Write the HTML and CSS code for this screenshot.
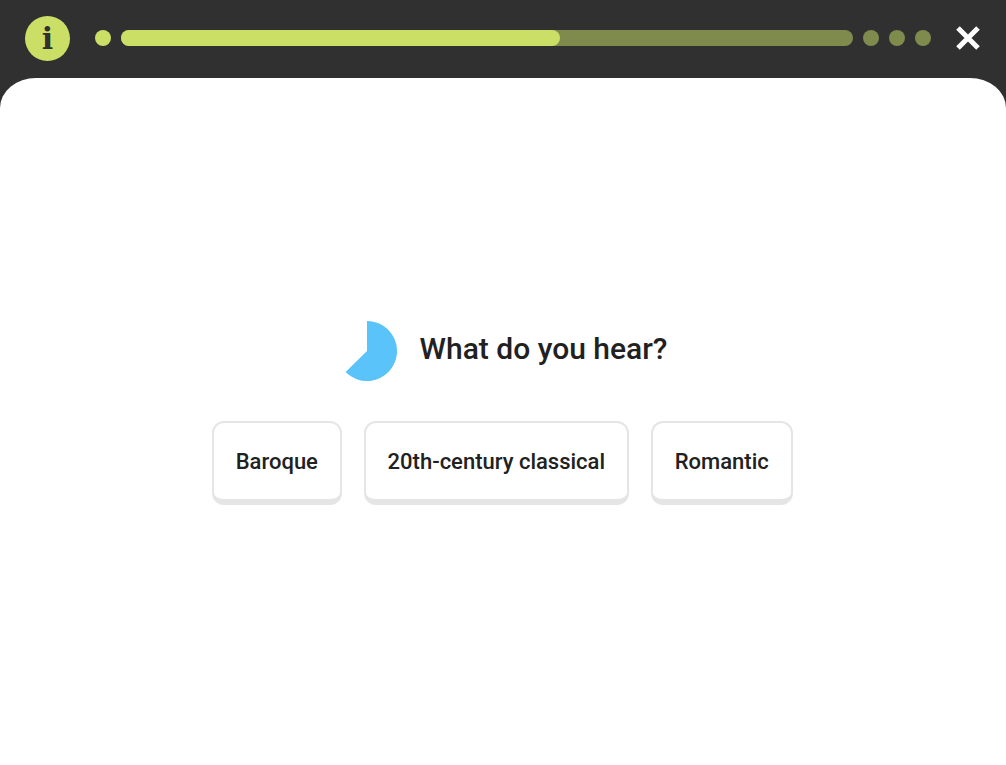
FILE: index.html
```html
<!DOCTYPE html>
<html>
	<head>
		<title>Listening quiz</title>
		<meta charset="UTF-8">
		<link rel="stylesheet" href="styles.css">
	</head>
	<body>
		<header class="topbar">
			<div class="info-badge">i</div>
			<div class="progress">
				<span class="dot"></span>
				<div class="track"><div class="track-fill"></div></div>
				<span class="dot dot-muted"></span>
				<span class="dot dot-muted"></span>
				<span class="dot dot-muted"></span>
			</div>
			<svg class="close-icon" width="26" height="26" viewBox="0 0 26 26">
				<path d="M3 3 L23 23 M23 3 L3 23" stroke="#fff" stroke-width="5" fill="none"/>
			</svg>
		</header>

		<main class="panel">
			<div class="prompt">
				<svg class="timer" width="60" height="60" viewBox="0 0 60 60">
					<path d="M30 0 A30 30 0 1 1 8.6 51 L30 30 Z" fill="#5ac4fa"/>
				</svg>
				<h1 class="question">What do you hear?</h1>
			</div>
			<div class="answers">
				<button class="answer">Baroque</button>
				<button class="answer">20th-century classical</button>
				<button class="answer">Romantic</button>
			</div>
		</main>
	</body>
</html>
```

FILE: styles.css
```css
html, body {
	height: 100%;
}

body {
	margin: 0;
	display: flex;
	flex-direction: column;
	background: #303030;
	font-family: Roboto, sans-serif;
	color: #212121;
}

.topbar {
	height: 78px;
	flex: none;
	display: flex;
	align-items: center;
	padding: 0 25px 2px;
	box-sizing: border-box;
}

.info-badge {
	width: 45px;
	height: 45px;
	flex: none;
	border-radius: 50%;
	background: #cbdf67;
	color: #303030;
	font-family: "DejaVu Serif", serif;
	font-weight: bold;
	font-size: 30px;
	line-height: 45px;
	text-align: center;
}

.progress {
	flex: 1;
	display: flex;
	align-items: center;
	gap: 10px;
	margin: 0 24px 0 25px;
}

.dot {
	width: 16px;
	height: 16px;
	flex: none;
	border-radius: 50%;
	background: #cbdf67;
}

.dot-muted {
	background: #7f8b4d;
}

.track {
	flex: 1;
	height: 16px;
	border-radius: 8px;
	background: #7f8b4d;
}

.track-fill {
	width: 60%;
	height: 100%;
	border-radius: 8px;
	background: #cbdf67;
}

.close-icon {
	flex: none;
}

.panel {
	flex: 1;
	display: flex;
	flex-direction: column;
	align-items: center;
	justify-content: center;
	gap: 40px;
	padding-bottom: 17px;
	box-sizing: border-box;
	background: #fff;
	border-radius: 36px 36px 0 0 / 30px 30px 0 0;
}

.prompt {
	display: flex;
	align-items: center;
	gap: 23px;
	padding-right: 2px;
}

.question {
	margin: 0 0 5px;
	font-size: 30px;
	font-weight: 500;
}

.answers {
	display: flex;
	gap: 22px;
	padding-right: 1.5px;
}

.answer {
	height: 84px;
	padding: 0 21.85px;
	background: #fff;
	border: 2px solid #e5e5e5;
	border-bottom-width: 6px;
	border-radius: 12px;
	font-family: Roboto, sans-serif;
	font-size: 22px;
	font-weight: 500;
	color: #212121;
}
```
